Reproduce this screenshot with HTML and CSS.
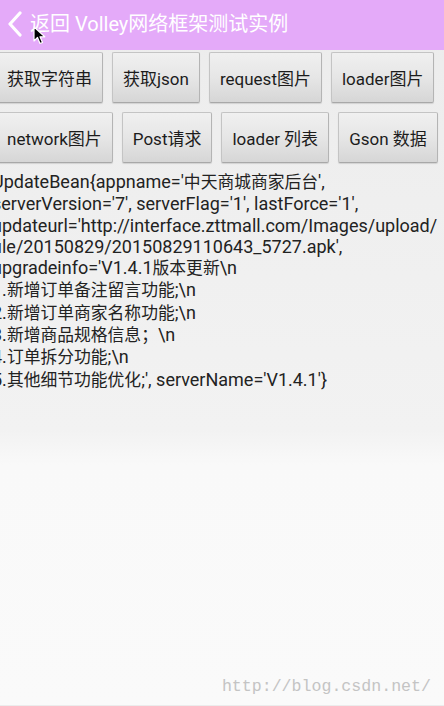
FILE: index.html
```html
<!DOCTYPE html>
<html lang="zh">
<head>
<meta charset="utf-8">
<title>Volley网络框架测试实例</title>
<link rel="stylesheet" href="styles.css">
</head>
<body>
<div class="screen">
  <header class="appbar">
    <svg class="back" width="18" height="26" viewBox="0 0 18 26"><path d="M14 2 L4 13 L14 24" fill="none" stroke="#ffffff" stroke-width="3.2" stroke-linecap="round" stroke-linejoin="round"/></svg>
    <span class="title">返回 Volley网络框架测试实例</span>
  </header>
  <div class="buttons">
    <div class="row">
      <button class="btn">获取字符串</button>
      <button class="btn">获取json</button>
      <button class="btn">request图片</button>
      <button class="btn">loader图片</button>
    </div>
    <div class="row">
      <button class="btn">network图片</button>
      <button class="btn">Post请求</button>
      <button class="btn">loader 列表</button>
      <button class="btn">Gson 数据</button>
    </div>
  </div>
  <div class="result">
    <div class="line">UpdateBean{appname='<span class="cjk">中天商城商家后台</span>',</div>
    <div class="line">serverVersion='7', serverFlag='1', lastForce='1',</div>
    <div class="line">updateurl='http://interface.zttmall.com/Images/upload/</div>
    <div class="line">file/20150829/20150829110643_5727.apk',</div>
    <div class="line">upgradeinfo='V1.4.1<span class="cjk">版本更新</span>\n</div>
    <div class="line">1.<span class="cjk">新增订单备注留言功能</span>;\n</div>
    <div class="line">2.<span class="cjk">新增订单商家名称功能</span>;\n</div>
    <div class="line">3.<span class="cjk">新增商品规格信息；</span>\n</div>
    <div class="line">4.<span class="cjk">订单拆分功能</span>;\n</div>
    <div class="line">5.<span class="cjk">其他细节功能优化</span>;', serverName='V1.4.1'}</div>
  </div>
  <div class="watermark">http://blog.csdn.net/</div>
  <svg class="cursor" width="14" height="20" viewBox="0 0 14 20"><path d="M1 1 L1 15 L4.5 11.5 L7 17.5 L9.5 16.5 L7 10.8 L11.8 10.8 Z" fill="#000" stroke="#fff" stroke-width="1.2" stroke-linejoin="round"/></svg>
</div>
</body>
</html>
```
FILE: styles.css
```css
* { box-sizing: border-box; }
html, body { margin: 0; padding: 0; }
body {
  width: 444px;
  height: 706px;
  overflow: hidden;
  font-family: Roboto, "Noto Sans CJK SC", sans-serif;
}
.screen {
  position: relative;
  width: 444px;
  height: 706px;
  overflow: hidden;
  background: linear-gradient(to bottom, #ececec 0px, #efefef 200px, #f2f2f2 430px, #f9f9f9 465px, #fafafa 706px);
  border-bottom: 1px solid #ececec;
}
.appbar {
  height: 50px;
  background: #e4aaf9;
  display: flex;
  align-items: center;
  padding-left: 6px;
  gap: 6px;
}
.back { display: block; margin-top: -2px; }
.title {
  color: #ffffff;
  font-size: 20px;
  line-height: 24px;
  margin-top: -3px;
}
.buttons {
  display: flex;
  flex-direction: column;
  gap: 9px;
  padding-top: 2px;
  margin-left: -4px;
}
.row {
  display: flex;
  gap: 9px;
}
.btn {
  height: 51px;
  padding: 0 10px;
  font-family: Roboto, "Noto Sans CJK SC", sans-serif;
  font-size: 17px;
  color: #1c1c1c;
  white-space: nowrap;
  border: 1px solid #c4c4c4;
  border-right-color: #b4b4b4;
  border-bottom-color: #a8a8a8;
  border-radius: 2px;
  background: linear-gradient(to bottom, #f0f0f0 0%, #e6e6e6 50%, #d6d6d6 100%);
  box-shadow: 0 1px 1px rgba(0,0,0,0.12);
}
.result {
  margin-top: 8px;
  margin-left: -8px;
  font-size: 18px;
  line-height: 21.3px;
  color: #222222;
}
.line { white-space: nowrap; }
.cjk { font-size: 16.8px; }
.watermark {
  position: absolute;
  right: 13px;
  bottom: 9px;
  font-family: "Liberation Mono", "DejaVu Sans Mono", monospace;
  font-size: 16.6px;
  color: #c4c4c4;
}
.cursor {
  position: absolute;
  left: 33px;
  top: 26px;
}
```
